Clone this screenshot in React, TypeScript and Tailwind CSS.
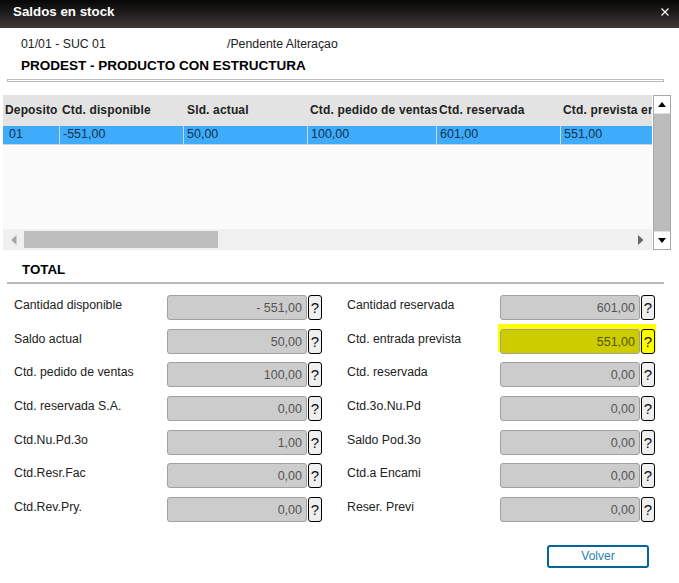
const font = { fontFamily: '"Liberation Sans", Arial, sans-serif' };

const cols = [
  { w: 'w-[57px]', h: 'Deposito', v: '01', pl: 'pl-[2px]', vl: 'pl-[6px]' },
  { w: 'w-[124px]', h: 'Ctd. disponible', v: '-551,00', pl: 'pl-[2px]', vl: 'pl-[3px]' },
  { w: 'w-[124px]', h: 'Sld. actual', v: '50,00', pl: 'pl-[3px]', vl: 'pl-[3px]' },
  { w: 'w-[129px]', h: 'Ctd. pedido de ventas', v: '100,00', pl: 'pl-[2px]', vl: 'pl-[3px]' },
  { w: 'w-[124px]', h: 'Ctd. reservada', v: '601,00', pl: 'pl-[2px]', vl: 'pl-[3px]' },
  { w: 'w-[91px]', h: 'Ctd. prevista en', v: '551,00', pl: 'pl-[2px]', vl: 'pl-[3px]' },
];

const left = [
  ['Cantidad disponible', '- 551,00'],
  ['Saldo actual', '50,00'],
  ['Ctd. pedido de ventas', '100,00'],
  ['Ctd. reservada S.A.', '0,00'],
  ['Ctd.Nu.Pd.3o', '1,00'],
  ['Ctd.Resr.Fac', '0,00'],
  ['Ctd.Rev.Pry.', '0,00'],
];
const right = [
  ['Cantidad reservada', '601,00', false],
  ['Ctd. entrada prevista', '551,00', true],
  ['Ctd. reservada', '0,00', false],
  ['Ctd.3o.Nu.Pd', '0,00', false],
  ['Saldo Pod.3o', '0,00', false],
  ['Ctd.a Encami', '0,00', false],
  ['Reser. Previ', '0,00', false],
];

function Field({ label, value, hl }: { label: string; value: string; hl?: boolean }) {
  return (
    <div className="flex items-start h-[25px]">
      <div className="w-[153px] text-[12.3px] leading-[14px] text-[#222] pt-[3px]">{label}</div>
      <div className="relative flex gap-[1px]">
        {hl && <div className="absolute -top-[5px] -left-[2px] w-[158px] h-[28px] bg-[#ffff00]" />}
        <div
          className={
            'relative w-[140px] h-[25px] rounded-[3px] border border-[#a0a0a0] text-right pr-[4px] text-[12.5px] leading-[24px] ' +
            (hl ? 'bg-[#cccc00] text-[#555500]' : 'bg-[#cccccc] text-[#555]')
          }
        >
          {value}
        </div>
        <div
          className={
            'relative w-[14px] h-[25px] rounded-[3px] border border-black text-center text-[15px] leading-[23px] text-[#111] ' +
            (hl ? 'bg-[#ffff00]' : 'bg-[#efefef]')
          }
        >
          ?
        </div>
      </div>
    </div>
  );
}

export default function App() {
  return (
    <div style={font} className="w-[679px] h-[583px] bg-white overflow-hidden">
      <div className="h-[28px] bg-gradient-to-b from-[#070707] to-[#3f3b37] flex items-start justify-between pl-[13px] pr-[10px]">
        <span className="text-white font-bold text-[13.33px] leading-[15px] pt-[4px]">Saldos en stock</span>
        <svg width="8" height="8" viewBox="0 0 8 8" className="mt-[8px]">
          <path d="M0.5 0.5L7.5 7.5M7.5 0.5L0.5 7.5" stroke="#fff" strokeWidth="1.2" />
        </svg>
      </div>

      <div className="flex pl-[21px] pt-[10px] text-[12.3px] leading-[13px] text-[#222]">
        <span className="w-[206px]">01/01 - SUC 01</span>
        <span>/Pendente Alteraçao</span>
      </div>
      <div className="pl-[21px] pt-[8px] text-[13.5px] leading-[14px] font-bold text-black">
        PRODEST - PRODUCTO CON ESTRUCTURA
      </div>
      <div className="ml-[7px] w-[657px] h-[3px] mt-[6px] border border-[#bbbbbb]" />

      <div className="flex ml-[3px] mt-[13px] h-[155px]">
        <div className="w-[649px] flex flex-col">
          <div className="h-[31px] flex bg-[#e3e3e3] items-center text-[12px] tracking-[0.15px] font-bold text-[#222] pb-[1px]">
            {cols.map((c) => (
              <div key={c.h} className={c.w + ' ' + c.pl + ' whitespace-nowrap overflow-hidden'}>
                {c.h}
              </div>
            ))}
          </div>
          <div className="h-[19px] flex bg-[#3fabfb] border-b border-[#d0d0d0] text-[12.5px] leading-[17px] text-[#13334f]">
            {cols.map((c) => (
              <div key={c.h} className={c.w + ' ' + c.vl + ' border-r border-[#c8d8e4] last:border-r-0'}>
                {c.v}
              </div>
            ))}
          </div>
          <div className="flex-1 bg-[#fafafa]" />
          <div className="h-[21px] bg-[#f0f0f0] flex items-center">
            <svg width="6" height="10" viewBox="0 0 6 10" className="ml-[8px] shrink-0">
              <path d="M5.5 0V10L0 5Z" fill="#a8a8a8" />
            </svg>
            <div className="w-[194px] h-[17px] bg-[#bebebe] ml-[7px]" />
            <div className="flex-1" />
            <svg width="6" height="10" viewBox="0 0 6 10" className="mr-[8px] shrink-0">
              <path d="M0 0V10L5.5 5Z" fill="#666" />
            </svg>
          </div>
        </div>
        <div className="ml-[1px] w-[18px] flex flex-col border border-[#a8a8a8] bg-[#bcbcbc]">
          <div className="h-[18px] bg-white flex items-center justify-center border-b border-[#e0e0e0]">
            <svg width="8" height="5" viewBox="0 0 8 5">
              <path d="M4 0L8 5H0Z" fill="#000" />
            </svg>
          </div>
          <div className="flex-1" />
          <div className="h-[18px] bg-white flex items-center justify-center border-t border-[#e0e0e0]">
            <svg width="8" height="5" viewBox="0 0 8 5">
              <path d="M4 5L8 0H0Z" fill="#000" />
            </svg>
          </div>
        </div>
      </div>

      <div className="pl-[22px] mt-[13px] text-[13.33px] leading-[14px] font-bold text-black">TOTAL</div>
      <div className="ml-[7px] w-[657px] h-[2px] bg-[#bbbbbb] mt-[5px]" />

      <div className="flex pl-[14px] pt-[11px]">
        <div className="w-[333px] flex flex-col gap-[8.67px]">
          {left.map(([l, v]) => (
            <Field key={l} label={l} value={v} />
          ))}
        </div>
        <div className="flex flex-col gap-[8.67px]">
          {right.map(([l, v, h]) => (
            <Field key={l as string} label={l as string} value={v as string} hl={h as boolean} />
          ))}
        </div>
      </div>

      <div className="flex justify-end pr-[30px] mt-[23px]">
        <button className="w-[102px] h-[23px] rounded-[3px] border-2 border-[#04659c] bg-white text-[#2a7fb0] text-[12px] leading-[17px]">
          Volver
        </button>
      </div>
    </div>
  );
}
